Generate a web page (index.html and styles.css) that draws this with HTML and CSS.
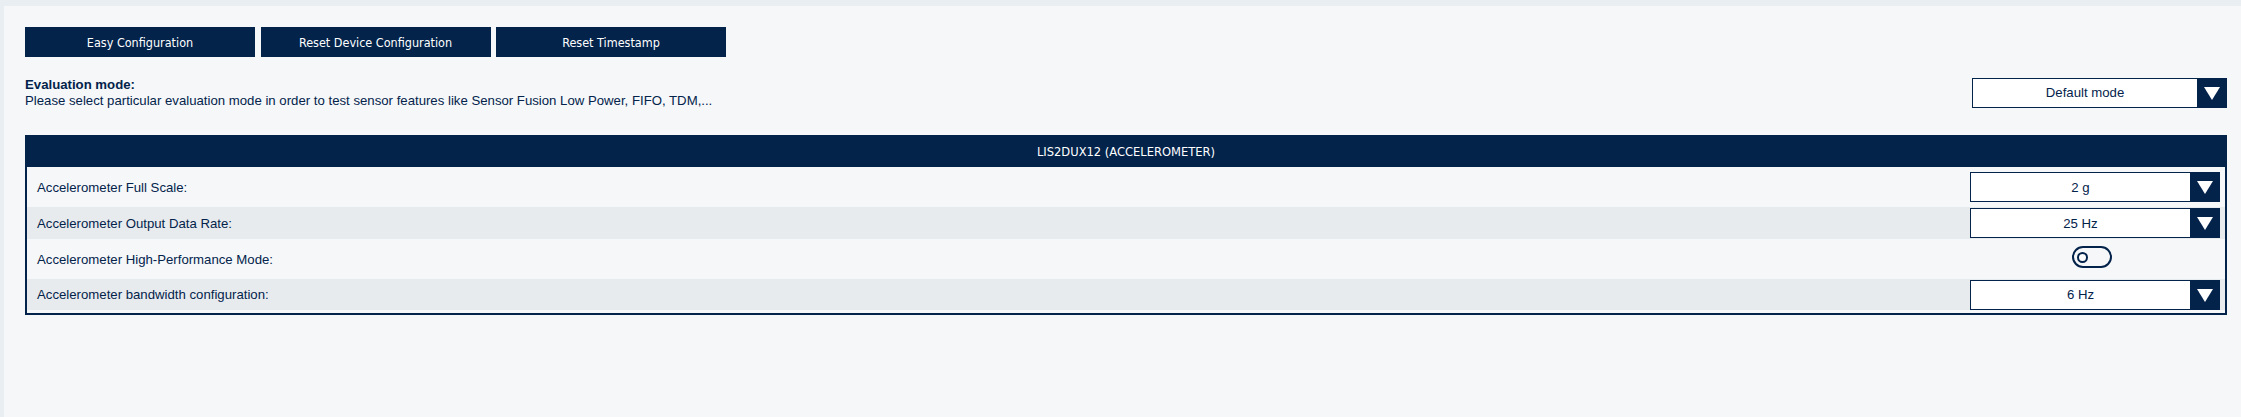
FILE: index.html
```html
<!DOCTYPE html>
<html lang="en">
<head>
    <meta charset="UTF-8">
    <meta name="viewport" content="width=device-width, initial-scale=1.0">
    <title>Sensor configuration</title>
    <link rel="stylesheet" href="styles.css">
</head>
<body>
    <main class="page">
        <div class="actions">
            <button class="action-btn">Easy Configuration</button>
            <button class="action-btn">Reset Device Configuration</button>
            <button class="action-btn">Reset Timestamp</button>
        </div>

        <section class="eval-mode">
            <div class="eval-text">
                <div class="eval-title">Evaluation mode:</div>
                <div>Please select particular evaluation mode in order to test sensor features like Sensor Fusion Low Power, FIFO, TDM,...</div>
            </div>
            <div class="select select-wide">
                <span class="select-value">Default mode</span>
                <span class="select-arrow"></span>
            </div>
        </section>

        <section class="sensor-table">
            <div class="sensor-head">LIS2DUX12 (ACCELEROMETER)</div>
            <div class="row row-tall">
                <span class="row-label">Accelerometer Full Scale:</span>
                <div class="row-ctrl">
                    <div class="select"><span class="select-value">2 g</span><span class="select-arrow"></span></div>
                </div>
            </div>
            <div class="row row-alt">
                <span class="row-label">Accelerometer Output Data Rate:</span>
                <div class="row-ctrl">
                    <div class="select"><span class="select-value">25 Hz</span><span class="select-arrow"></span></div>
                </div>
            </div>
            <div class="row row-tall">
                <span class="row-label">Accelerometer High-Performance Mode:</span>
                <div class="row-ctrl">
                    <span class="toggle"><span class="knob"></span></span>
                </div>
            </div>
            <div class="row row-alt">
                <span class="row-label">Accelerometer bandwidth configuration:</span>
                <div class="row-ctrl">
                    <div class="select"><span class="select-value">6 Hz</span><span class="select-arrow"></span></div>
                </div>
            </div>
        </section>
    </main>
</body>
</html>
```

FILE: styles.css
```css
html, body {
    margin: 0;
    height: 100%;
}
body {
    background-color: #e9eef3;
    font-family: "Liberation Sans", Arial, sans-serif;
    font-size: 13.2px;
    color: #03234b;
}
.page {
    box-sizing: border-box;
    margin: 6px 0 0 4px;
    min-height: calc(100% - 6px);
    padding: 21px 14px 0 21px;
    background-color: #f5f7f9;
}
.actions {
    display: flex;
    gap: 5.5px;
}
.action-btn {
    width: 230px;
    height: 30px;
    border: none;
    padding: 0;
    background-color: #03234b;
    color: #ffffff;
    font-family: "DejaVu Sans Condensed", "DejaVu Sans", Tahoma, sans-serif;
    font-size: 12.5px;
}
.eval-mode {
    display: flex;
    justify-content: space-between;
    align-items: center;
    margin-top: 20px;
    line-height: 16px;
}
.eval-title {
    font-weight: bold;
}
.select {
    display: flex;
    box-sizing: border-box;
    width: 250px;
    height: 30px;
    border: 1px solid #03234b;
    background-color: #ffffff;
}
.select-wide {
    width: 255px;
}
.select-value {
    flex: 1;
    display: flex;
    align-items: center;
    justify-content: center;
}
.select-arrow {
    position: relative;
    width: 29px;
    background-color: #03234b;
}
.select-arrow::after {
    content: "";
    position: absolute;
    left: 7px;
    top: 8px;
    border-left: 8px solid transparent;
    border-right: 8px solid transparent;
    border-top: 13px solid #ffffff;
}
.sensor-table {
    margin-top: 26px;
    border: 2px solid #03234b;
    border-top: none;
    padding-bottom: 3px;
}
.sensor-head {
    height: 32px;
    margin: 0 -2px;
    display: flex;
    align-items: center;
    justify-content: center;
    background-color: #03234b;
    color: #ffffff;
    font-family: "DejaVu Sans Condensed", "DejaVu Sans", Tahoma, sans-serif;
    font-size: 12.8px;
}
.row {
    display: flex;
    align-items: center;
    justify-content: space-between;
    padding: 0 5px 0 10px;
}
.row-tall {
    height: 40px;
}
.row-alt {
    height: 32px;
    background-color: #e8ebee;
}
.row-alt:last-child {
    height: 31px;
}
.row-ctrl {
    width: 250px;
    display: flex;
    justify-content: center;
}
.toggle {
    box-sizing: border-box;
    width: 40px;
    height: 22px;
    margin: -4px 6px 0 0;
    border: 2px solid #03234b;
    border-radius: 11px;
    display: flex;
    align-items: center;
    padding-left: 3px;
}
.knob {
    box-sizing: border-box;
    width: 11px;
    height: 11px;
    border: 2px solid #03234b;
    border-radius: 50%;
    background-color: #ffffff;
}
```
